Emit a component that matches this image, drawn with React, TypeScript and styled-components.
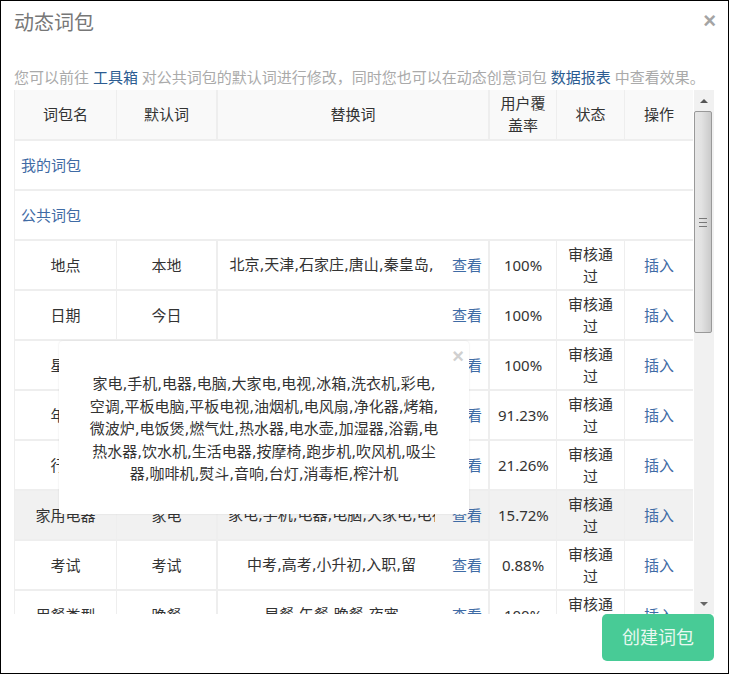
import styled, { createGlobalStyle } from 'styled-components';

const GlobalStyle = createGlobalStyle`
  html, body {
    margin: 0;
    padding: 0;
    background: #fff;
  }
`;

const COLUMNS = [102, 101, 272, 67, 68, 69];

const ROWS = [
  { name: '地点', word: '本地', list: '北京,天津,石家庄,唐山,秦皇岛,', rate: '100%' },
  { name: '日期', word: '今日', list: '', rate: '100%' },
  { name: '星期', word: '本周', list: '周一,周二,周三,周四,周五,周六', rate: '100%' },
  { name: '年份', word: '今年', list: '2016,2017,2018', rate: '91.23%' },
  { name: '行业', word: '行业', list: '教育,金融,旅游,汽车,医疗,房产', rate: '21.26%' },
  { name: '家用电器', word: '家电', list: '家电,手机,电器,电脑,大家电,电视', rate: '15.72%' },
  { name: '考试', word: '考试', list: '中考,高考,小升初,入职,留', rate: '0.88%' },
  { name: '用餐类型', word: '晚餐', list: '早餐,午餐,晚餐,夜宵', rate: '100%' },
];

const POPUP_TEXT =
  '家电,手机,电器,电脑,大家电,电视,冰箱,洗衣机,彩电,空调,平板电脑,平板电视,油烟机,电风扇,净化器,烤箱,微波炉,电饭煲,燃气灶,热水器,电水壶,加湿器,浴霸,电热水器,饮水机,生活电器,按摩椅,跑步机,吹风机,吸尘器,咖啡机,熨斗,音响,台灯,消毒柜,榨汁机';

function App() {
  return (
    <>
      <GlobalStyle />
      <Modal>
        <Header>
          <Title>动态词包</Title>
          <CloseButton>×</CloseButton>
        </Header>
        <Description>
          您可以前往 <StrongLink>工具箱</StrongLink> 对公共词包的默认词进行修改，同时您也可以在动态创意词包{' '}
          <StrongLink>数据报表</StrongLink> 中查看效果。
        </Description>
        <Panel>
          <TableWrapper>
            <Table>
              <colgroup>
                {COLUMNS.map((width, index) => (
                  <col key={index} width={width} />
                ))}
              </colgroup>
              <thead>
                <tr>
                  <HeadCell>词包名</HeadCell>
                  <HeadCell>默认词</HeadCell>
                  <HeadCell>替换词</HeadCell>
                  <HeadCell>用户覆盖率</HeadCell>
                  <HeadCell>状态</HeadCell>
                  <HeadCell>操作</HeadCell>
                </tr>
              </thead>
              <tbody>
                <tr>
                  <SectionCell colSpan={6}>我的词包</SectionCell>
                </tr>
                <tr>
                  <SectionCell colSpan={6}>公共词包</SectionCell>
                </tr>
                {ROWS.map((row) => (
                  <tr key={row.name}>
                    <Cell $active={row.name === '家用电器'}>{row.name}</Cell>
                    <Cell $active={row.name === '家用电器'}>{row.word}</Cell>
                    <Cell $active={row.name === '家用电器'}>
                      <ReplaceBox>
                        <ReplaceText>{row.list}</ReplaceText>
                        <TableLink>查看</TableLink>
                      </ReplaceBox>
                    </Cell>
                    <Cell $active={row.name === '家用电器'}>{row.rate}</Cell>
                    <Cell $active={row.name === '家用电器'}>审核通过</Cell>
                    <Cell $active={row.name === '家用电器'}>
                      <TableLink>插入</TableLink>
                    </Cell>
                  </tr>
                ))}
              </tbody>
            </Table>
          </TableWrapper>
          <Scrollbar>
            <ArrowBox>
              <ArrowUp />
            </ArrowBox>
            <Thumb>
              <Grip />
            </Thumb>
            <ScrollSpace />
            <ArrowBox>
              <ArrowDown />
            </ArrowBox>
          </Scrollbar>
          <Popup>
            <PopupClose>×</PopupClose>
            {POPUP_TEXT}
          </Popup>
        </Panel>
        <CreateButton>创建词包</CreateButton>
      </Modal>
    </>
  );
}

export default App;

const Modal = styled.div`
  width: 729px;
  height: 674px;
  box-sizing: border-box;
  border: 1px solid #000;
  padding: 0 14px 12px 13px;
  display: flex;
  flex-direction: column;
  overflow: hidden;
  background: #fff;
  font-family: 'Noto Sans', 'Noto Sans CJK SC', sans-serif;
  font-size: 15px;
  color: #333;
`;

const Header = styled.div`
  display: flex;
  justify-content: space-between;
  align-items: center;
  height: 30px;
  margin-top: 7px;
`;

const Title = styled.div`
  font-size: 20px;
  line-height: 30px;
  color: #777;
`;

const CloseButton = styled.div`
  font-family: 'Liberation Sans', sans-serif;
  font-size: 22px;
  font-weight: 700;
  line-height: 30px;
  color: #a4a4a4;
  margin-right: -2px;
  margin-top: -4px;
`;

const Description = styled.div`
  margin-top: 28px;
  height: 23px;
  line-height: 23px;
  white-space: nowrap;
  color: #aaa;
`;

const StrongLink = styled.a`
  color: #2c5c91;
`;

const Panel = styled.div`
  position: relative;
  display: flex;
  height: 524px;
  flex: none;
  margin-top: 1px;
`;

const TableWrapper = styled.div`
  width: 679px;
  flex: none;
  overflow: hidden;
`;

const Table = styled.table`
  width: 679px;
  table-layout: fixed;
  border-collapse: separate;
  border-spacing: 0;
  border-left: 1px solid #eee;
`;

const HeadCell = styled.th`
  height: 51px;
  box-sizing: border-box;
  padding: 2px 8px 3px;
  background: #f9f9f9;
  border-bottom: 2px solid #eee;
  border-right: 1px solid #eee;
  font-weight: 400;
  line-height: 22px;
  text-align: center;

  &:nth-child(2),
  &:nth-child(3) {
    border-right-width: 2px;
  }
`;

const SectionCell = styled.td`
  height: 50px;
  box-sizing: border-box;
  padding: 1px 6px 3px;
  border-bottom: 2px solid #eee;
  color: #3f6ba5;
`;

const Cell = styled.td<{ $active?: boolean }>`
  height: 50px;
  box-sizing: border-box;
  padding: 2px 8px;
  background: ${({ $active }) => ($active ? '#f1f1f1' : '#fff')};
  border-bottom: 2px solid #eee;
  border-right: 1px solid #eee;
  line-height: 22px;
  text-align: center;

  &:nth-child(2),
  &:nth-child(3) {
    border-right-width: 2px;
  }

  &:nth-child(3) {
    padding-right: 6px;
  }
`;

const ReplaceBox = styled.div`
  display: flex;
  align-items: center;
  gap: 17px;
  padding-left: 2px;
`;

const ReplaceText = styled.div`
  flex: 1;
  min-width: 0;
  height: 22px;
  overflow: hidden;
  white-space: nowrap;
  text-align: center;
  font-family: 'DejaVu Sans', 'Noto Sans CJK SC', sans-serif;
`;

const TableLink = styled.a`
  flex: none;
  color: #3f6ba5;
`;

const Scrollbar = styled.div`
  width: 20px;
  margin-left: 1px;
  display: flex;
  flex-direction: column;
  background: #f1f1f1;
`;

const ArrowBox = styled.div`
  height: 21px;
  flex: none;
  display: flex;
  align-items: center;
  justify-content: center;
  padding-right: 1px;
`;

const ArrowUp = styled.div`
  width: 0;
  height: 0;
  border-left: 4px solid transparent;
  border-right: 4px solid transparent;
  border-bottom: 4px solid #555;
`;

const ArrowDown = styled.div`
  width: 0;
  height: 0;
  border-left: 4px solid transparent;
  border-right: 4px solid transparent;
  border-top: 4px solid #666;
`;

const Thumb = styled.div`
  width: 18px;
  height: 222px;
  box-sizing: border-box;
  flex: none;
  border: 1px solid #999;
  border-radius: 2px;
  background: linear-gradient(90deg, #e6e6e6 0%, #e2e2e2 40%, #cacaca 100%);
  display: flex;
  align-items: center;
  justify-content: center;
`;

const Grip = styled.div`
  width: 8px;
  height: 9px;
  background: repeating-linear-gradient(180deg, #777 0 1px, transparent 1px 4px);
`;

const ScrollSpace = styled.div`
  flex: 1;
`;

const Popup = styled.div`
  position: absolute;
  left: 45px;
  top: 251px;
  width: 410px;
  height: 173px;
  box-sizing: border-box;
  padding: 32px 30px 0;
  background: #fff;
  border-radius: 4px;
  box-shadow: 0 0 2px rgba(0, 0, 0, 0.12);
  font-family: 'DejaVu Sans', 'Noto Sans CJK SC', sans-serif;
  line-height: 22.5px;
  text-align: center;
  word-break: break-all;
`;

const PopupClose = styled.span`
  position: absolute;
  right: 5px;
  top: 4px;
  font-family: 'Liberation Sans', sans-serif;
  font-size: 20px;
  line-height: 22px;
  font-weight: 700;
  color: #d0d0d0;
`;

const CreateButton = styled.div`
  align-self: flex-end;
  width: 112px;
  height: 47px;
  flex: none;
  border-radius: 5px;
  background: #48cb96;
  color: #e8f8f1;
  font-size: 18px;
  line-height: 47px;
  text-align: center;
`;
